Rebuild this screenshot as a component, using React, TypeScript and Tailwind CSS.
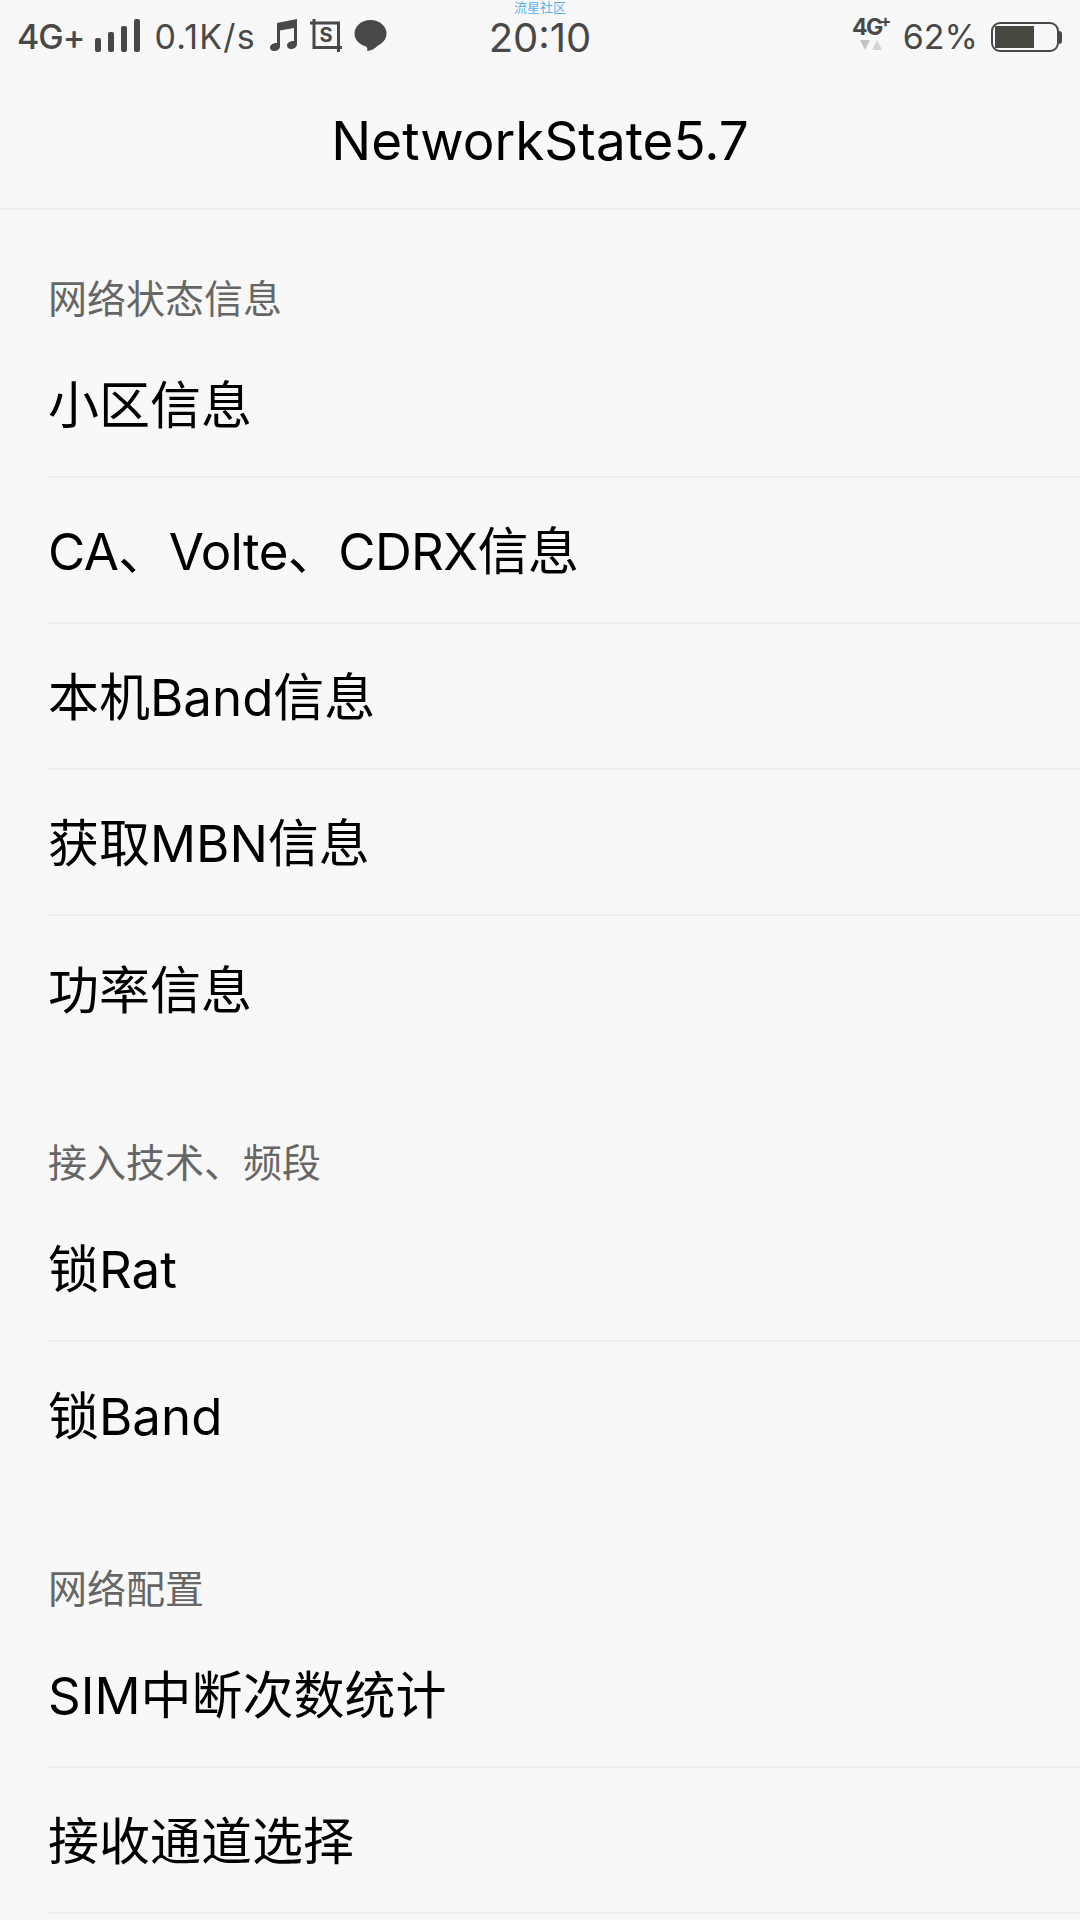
const FONT = "font-['Inter','Noto_Sans_CJK_SC',sans-serif]";

const sections = [
  {
    title: '网络状态信息',
    items: ['小区信息', 'CA、Volte、CDRX信息', '本机Band信息', '获取MBN信息', '功率信息'],
    labelHeight: 'h-[122px]',
  },
  {
    title: '接入技术、频段',
    items: ['锁Rat', '锁Band'],
    labelHeight: 'h-[134px]',
  },
  {
    title: '网络配置',
    items: ['SIM中断次数统计', '接收通道选择', ''],
    labelHeight: 'h-[134px]',
  },
];

function SignalBars() {
  return (
    <svg width="46" height="33" viewBox="0 0 46 33" fill="#484848">
      <rect x="0" y="19" width="6" height="14" rx="2" />
      <rect x="13" y="13" width="6" height="20" rx="2" />
      <rect x="26" y="7" width="6" height="26" rx="2" />
      <rect x="39" y="0" width="6" height="33" rx="2" />
    </svg>
  );
}

function MusicIcon() {
  return (
    <svg width="28" height="32" viewBox="0 0 28 32" fill="#484848">
      <path d="M7 4 L27 0 V25 C27 28 24 30 21 30 C18 30 17 28 17 26.5 C17 24 20 22 24 22 V9 L10 11.5 V27.5 C10 30 7 32 4 32 C1.5 32 0 30.5 0 28.5 C0 26 3 24 7 24 Z" />
    </svg>
  );
}

function StoreIcon() {
  return (
    <svg width="32" height="33" viewBox="0 0 32 33" fill="none" stroke="#484848" strokeWidth="3">
      <path d="M0 4 H28.5 V33 M4 0 V28.5 H32" />
    </svg>
  );
}

function BubbleIcon() {
  return (
    <svg width="33" height="31" viewBox="0 0 33 31" fill="#484848">
      <ellipse cx="16.5" cy="13.5" rx="16" ry="13.5" />
      <path d="M11 25 L24 25 C22 28 18 30.5 13 31 C14 29 13 27 11 25 Z" />
    </svg>
  );
}

function StatusBar() {
  return (
    <div className={`relative flex h-[70px] items-center justify-between pl-[17px] pr-[18px] pt-[4px] text-[#484848] ${FONT}`}>
      <div className="flex items-center">
        <span className="text-[34px] leading-none font-medium tracking-[-1px]">4G+</span>
        <div className="ml-[11px] flex -translate-y-[2px]">
          <SignalBars />
        </div>
        <span className="ml-[13px] text-[34px] leading-none tracking-[1.2px]">0.1K/s</span>
        <div className="ml-[14px] flex -translate-y-[2px] items-center gap-[12px]">
          <MusicIcon />
          <div className="relative flex">
            <StoreIcon />
            <span className="absolute inset-0 flex items-center justify-center text-[20px] font-bold leading-none">S</span>
          </div>
          <BubbleIcon />
        </div>
      </div>
      <div className="absolute left-0 right-0 top-0 flex flex-col items-center">
        <span className="text-[13px] leading-[14px] text-[#5ab0f0] font-['Noto_Sans_CJK_SC',sans-serif]">流星社区</span>
        <span className="mt-[2px] text-[40px] leading-[44px]">20:10</span>
      </div>
      <div className="flex items-center">
        <div className="flex -translate-y-[4px] translate-x-[2px] flex-col items-center">
          <span className="relative pr-[8px] text-[23px] leading-[22px] font-bold tracking-[-1.5px]">
            4G
            <span className="absolute right-0 -top-[3px] text-[17px] leading-[17px]">+</span>
          </span>
          <svg width="22" height="11" viewBox="0 0 22 11" className="mt-[2px]">
            <path d="M0 0 H10 L5 10 Z" fill="#c4c4c4" />
            <path d="M12 10 H22 L17 0 Z" fill="#d4d4d4" />
          </svg>
        </div>
        <span className="ml-[15px] text-[34px] leading-none">62%</span>
        <div className="ml-[13px] flex items-center">
          <div className="h-[30px] w-[68px] rounded-[9px] border-[2.5px] border-[#484848] p-[2px]">
            <div className="h-full w-[39px] bg-[#484840]" />
          </div>
          <div className="h-[13px] w-[3px] rounded-r-full bg-[#484848]" />
        </div>
      </div>
    </div>
  );
}

export default function App() {
  return (
    <div className={`h-[1920px] w-[1080px] overflow-hidden bg-[#f8f8f8] ${FONT}`}>
      <StatusBar />
      <div className="flex h-[140px] items-center justify-center border-b-2 border-[#eeeeee] pt-[4px]">
        <h1 className="text-[53px] font-normal leading-none text-black">NetworkState5.7</h1>
      </div>
      {sections.map((section) => (
        <section key={section.title} className="pl-[48px]">
          <div className={`flex ${section.labelHeight} items-end pb-[8px] text-[39px] leading-[50px] text-[#666666]`}>
            {section.title}
          </div>
          {section.items.map((item, i) => (
            <div
              key={i}
              className={`flex h-[146px] items-center pt-[5px] text-[51px] text-black ${
                item.includes('Volte') ? 'tracking-[-0.6px]' : ''
              } ${i < section.items.length - 1 ? 'border-b-2 border-[#eeeeee]' : ''}`}
            >
              {item}
            </div>
          ))}
        </section>
      ))}
    </div>
  );
}
